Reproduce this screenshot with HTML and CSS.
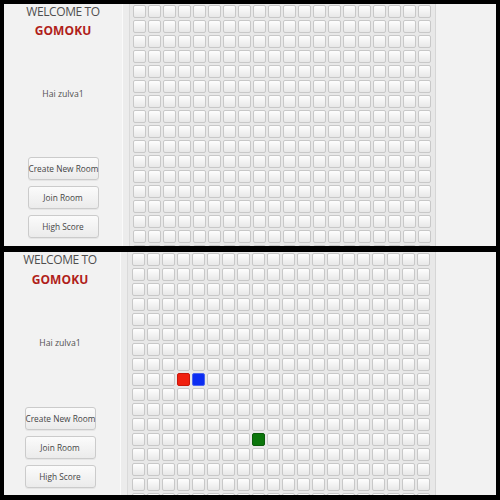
FILE: index.html
```html
<!DOCTYPE html>
<html lang="en">
<head>
<meta charset="utf-8">
<title>Gomoku</title>
<link rel="stylesheet" href="styles.css">
</head>
<body>
  <section class="shot shot--a">
    <aside class="sidebar">
      <div class="title">WELCOME TO</div>
      <div class="brand">GOMOKU</div>
      <div class="greet">Hai zulva1</div>
      <div class="actions">
        <button class="btn">Create New Room</button>
        <button class="btn">Join Room</button>
        <button class="btn">High Score</button>
      </div>
    </aside>
    <div class="divider"></div>
    <div class="board">
      <div class="grid" data-rows="17" data-stones=""></div>
    </div>
    <div class="rest"></div>
  </section>
  <section class="shot shot--b">
    <aside class="sidebar">
      <div class="title">WELCOME TO</div>
      <div class="brand">GOMOKU</div>
      <div class="greet">Hai zulva1</div>
      <div class="actions">
        <button class="btn">Create New Room</button>
        <button class="btn">Join Room</button>
        <button class="btn">High Score</button>
      </div>
    </aside>
    <div class="divider"></div>
    <div class="board">
      <div class="grid" data-rows="17" data-stones="8,3,red;8,4,blue;12,8,green"></div>
    </div>
    <div class="rest"></div>
  </section>
  <script src="board.js"></script>
</body>
</html>
```

FILE: styles.css
```css
html, body {
  margin: 0;
}
body {
  width: 500px;
  height: 500px;
  box-sizing: border-box;
  padding: 4px 4px 5px 4px;
  background: #000;
  display: flex;
  flex-direction: column;
  gap: 6px;
  overflow: hidden;
  font-family: "Open Sans", "DejaVu Sans", sans-serif;
}
.shot {
  display: flex;
  background: #f2f2f2;
  overflow: hidden;
  flex: none;
}
.shot--a { height: 242px; }
.shot--b { height: 243px; }

.sidebar {
  flex: none;
  width: 118px;
  box-sizing: border-box;
  display: flex;
  flex-direction: column;
  align-items: center;
}
.shot--b .sidebar {
  width: 116px;
  padding-right: 4px;
}
.title {
  font-size: 12px;
  line-height: 16px;
  color: #4f4f4f;
  letter-spacing: -0.4px;
  white-space: nowrap;
}
.brand {
  margin-top: 4px;
  font-size: 12px;
  line-height: 14px;
  font-weight: 700;
  color: #b01e1a;
  letter-spacing: 0.1px;
}
.shot--b .brand {
  margin-top: 5px;
}
.greet {
  margin-top: 49.5px;
  font-size: 8.7px;
  line-height: 12px;
  color: #505050;
}
.actions {
  margin-top: 57.8px;
  display: flex;
  flex-direction: column;
  gap: 6px;
}
.shot--b .actions {
  margin-top: 58.5px;
}
.btn {
  width: 71px;
  height: 23px;
  box-sizing: border-box;
  padding: 0;
  font-family: inherit;
  font-size: 8.3px;
  color: #454545;
  border: 1px solid #cbcbcb;
  border-radius: 3px;
  background: linear-gradient(#fbfbfb, #ebebeb);
  box-shadow: 0 1px 0 rgba(0,0,0,0.05);
  white-space: nowrap;
}

.divider {
  flex: none;
  width: 8px;
  box-sizing: border-box;
  border-left: 1px solid #fafafa;
  border-right: 1px solid #dadada;
  background: #ececec;
}

.board {
  flex: none;
  width: 306px;
  box-sizing: border-box;
  padding: 1px 5px 0 3px;
  background: #e8e8e8;
  border-right: 1px solid #d6d6d6;
}
.shot--b .board {
  width: 308px;
  padding-left: 4px;
  padding-right: 5px;
}
.grid {
  display: grid;
  grid-template-columns: repeat(20, 13px);
  grid-auto-rows: 13px;
  gap: 2px;
}
.cell {
  box-sizing: border-box;
  border: 1px solid #c8c8c8;
  border-radius: 2px;
  background: linear-gradient(#fefefe, #e8e8e8);
}
.cell--red {
  background: #f0200f;
  border-color: #c8170a;
}
.cell--blue {
  background: #0b2cf2;
  border-color: #4a64f0;
}
.cell--green {
  background: #0b760b;
  border-color: #0a5c0a;
}
.rest {
  flex: 1;
}
```

FILE: board.js
```js
document.querySelectorAll('.grid').forEach(function (grid) {
  var rows = parseInt(grid.dataset.rows, 10);
  var stones = {};
  (grid.dataset.stones || '').split(';').forEach(function (s) {
    if (!s) return;
    var p = s.split(',');
    stones[p[0] + ':' + p[1]] = p[2];
  });
  for (var r = 0; r < rows; r++) {
    for (var c = 0; c < 20; c++) {
      var d = document.createElement('div');
      d.className = 'cell';
      var k = stones[r + ':' + c];
      if (k) d.className += ' cell--' + k;
      grid.appendChild(d);
    }
  }
});
```
